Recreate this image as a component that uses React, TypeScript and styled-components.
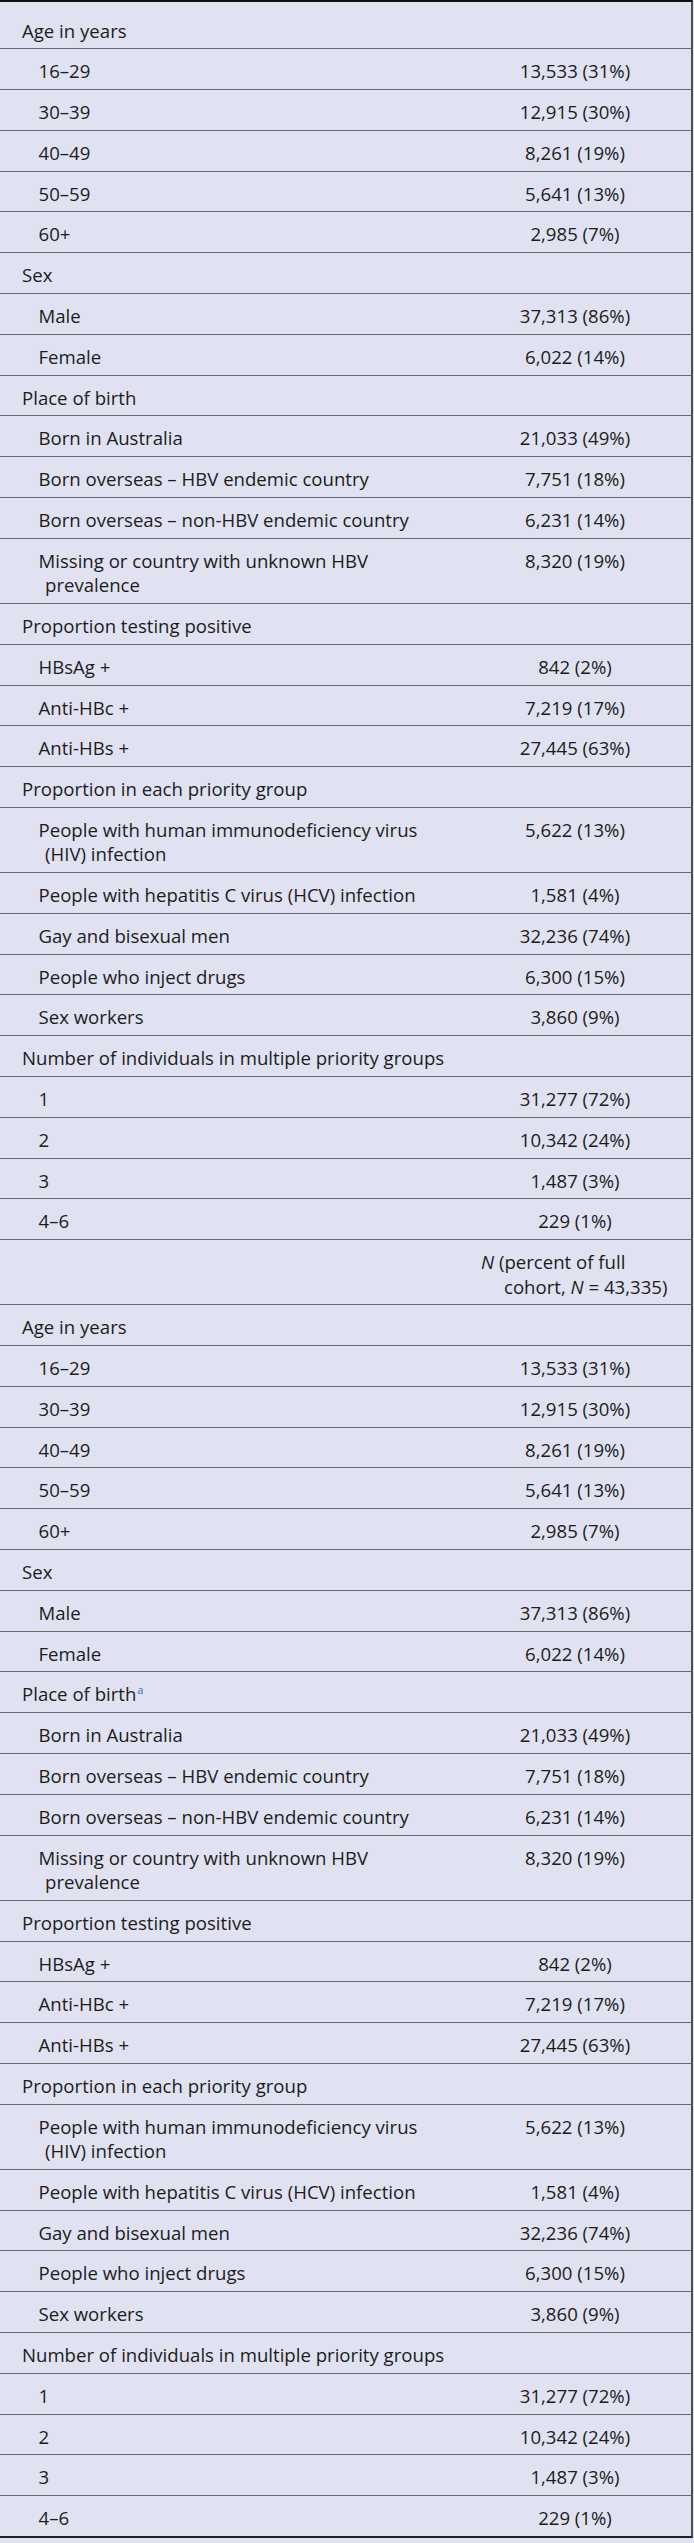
import React from "react";
import styled, { createGlobalStyle } from "styled-components";

const Global = createGlobalStyle`
  html, body {
    margin: 0;
    padding: 0;
    background: #e0e2f1;
  }
  body {
    font-family: "Open Sans", "Liberation Sans", sans-serif;
    color: #1c1c1c;
  }
`;

const Table = styled.div`
  width: 693px;
  box-sizing: border-box;
  background: #e0e2f1;
  border-top: 2px solid #111;
  border-bottom: 2px solid #222;
  border-right: 2px solid #4e4e4e;
  padding-top: 6.5px;
  font-size: 18.6px;
  line-height: 24.3px;
`;

const Row = styled.div`
  display: grid;
  grid-template-columns: 470px 1fr;
  border-bottom: 1px solid #6a6a6a;
  &:last-child {
    border-bottom: none;
  }
`;

const Label = styled.div<{ $level: "group" | "item" }>`
  padding: 10px 0 5.5px ${(p) => (p.$level === "item" ? "45px" : "22px")};
  text-indent: ${(p) => (p.$level === "item" ? "-6.5px" : "0")};
`;

const Value = styled.div`
  padding: 10px 11px 5.5px 0;
  text-align: center;
  white-space: nowrap;
`;

const HeadCell = styled.div`
  padding: 10px 0 5.5px 34px;
  text-indent: -23px;
`;

const Sup = styled.sup`
  color: #2f74b5;
  font-size: 11px;
  line-height: 0;
  vertical-align: 7px;
  margin-left: 1px;
`;

type Item = [React.ReactNode, string];
type Section = { title: React.ReactNode; rows: Item[] };

const buildSections = (note: boolean): Section[] => [
  {
    title: "Age in years",
    rows: [
      ["16–29", "13,533 (31%)"],
      ["30–39", "12,915 (30%)"],
      ["40–49", "8,261 (19%)"],
      ["50–59", "5,641 (13%)"],
      ["60+", "2,985 (7%)"],
    ],
  },
  {
    title: "Sex",
    rows: [
      ["Male", "37,313 (86%)"],
      ["Female", "6,022 (14%)"],
    ],
  },
  {
    title: note ? (
      <>
        Place of birth<Sup>a</Sup>
      </>
    ) : (
      "Place of birth"
    ),
    rows: [
      ["Born in Australia", "21,033 (49%)"],
      ["Born overseas – HBV endemic country", "7,751 (18%)"],
      ["Born overseas – non-HBV endemic country", "6,231 (14%)"],
      [
        <>
          Missing or country with unknown HBV
          <br />
          prevalence
        </>,
        "8,320 (19%)",
      ],
    ],
  },
  {
    title: "Proportion testing positive",
    rows: [
      ["HBsAg +", "842 (2%)"],
      ["Anti-HBc +", "7,219 (17%)"],
      ["Anti-HBs +", "27,445 (63%)"],
    ],
  },
  {
    title: "Proportion in each priority group",
    rows: [
      [
        <>
          People with human immunodeficiency virus
          <br />
          (HIV) infection
        </>,
        "5,622 (13%)",
      ],
      ["People with hepatitis C virus (HCV) infection", "1,581 (4%)"],
      ["Gay and bisexual men", "32,236 (74%)"],
      ["People who inject drugs", "6,300 (15%)"],
      ["Sex workers", "3,860 (9%)"],
    ],
  },
  {
    title: "Number of individuals in multiple priority groups",
    rows: [
      ["1", "31,277 (72%)"],
      ["2", "10,342 (24%)"],
      ["3", "1,487 (3%)"],
      ["4–6", "229 (1%)"],
    ],
  },
];

const renderSections = (sections: Section[], key: string) =>
  sections.flatMap((s, i) => [
    <Row key={`${key}-g${i}`}>
      <Label $level="group">{s.title}</Label>
      <Value />
    </Row>,
    ...s.rows.map((r, j) => (
      <Row key={`${key}-r${i}-${j}`}>
        <Label $level="item">{r[0]}</Label>
        <Value>{r[1]}</Value>
      </Row>
    )),
  ]);

export default function App() {
  return (
    <>
      <Global />
      <Table>
        {renderSections(buildSections(false), "a")}
        <Row>
          <Label $level="group" />
          <HeadCell>
            <i>N</i> (percent of full
            <br />
            cohort, <i>N</i> = 43,335)
          </HeadCell>
        </Row>
        {renderSections(buildSections(true), "b")}
      </Table>
    </>
  );
}
